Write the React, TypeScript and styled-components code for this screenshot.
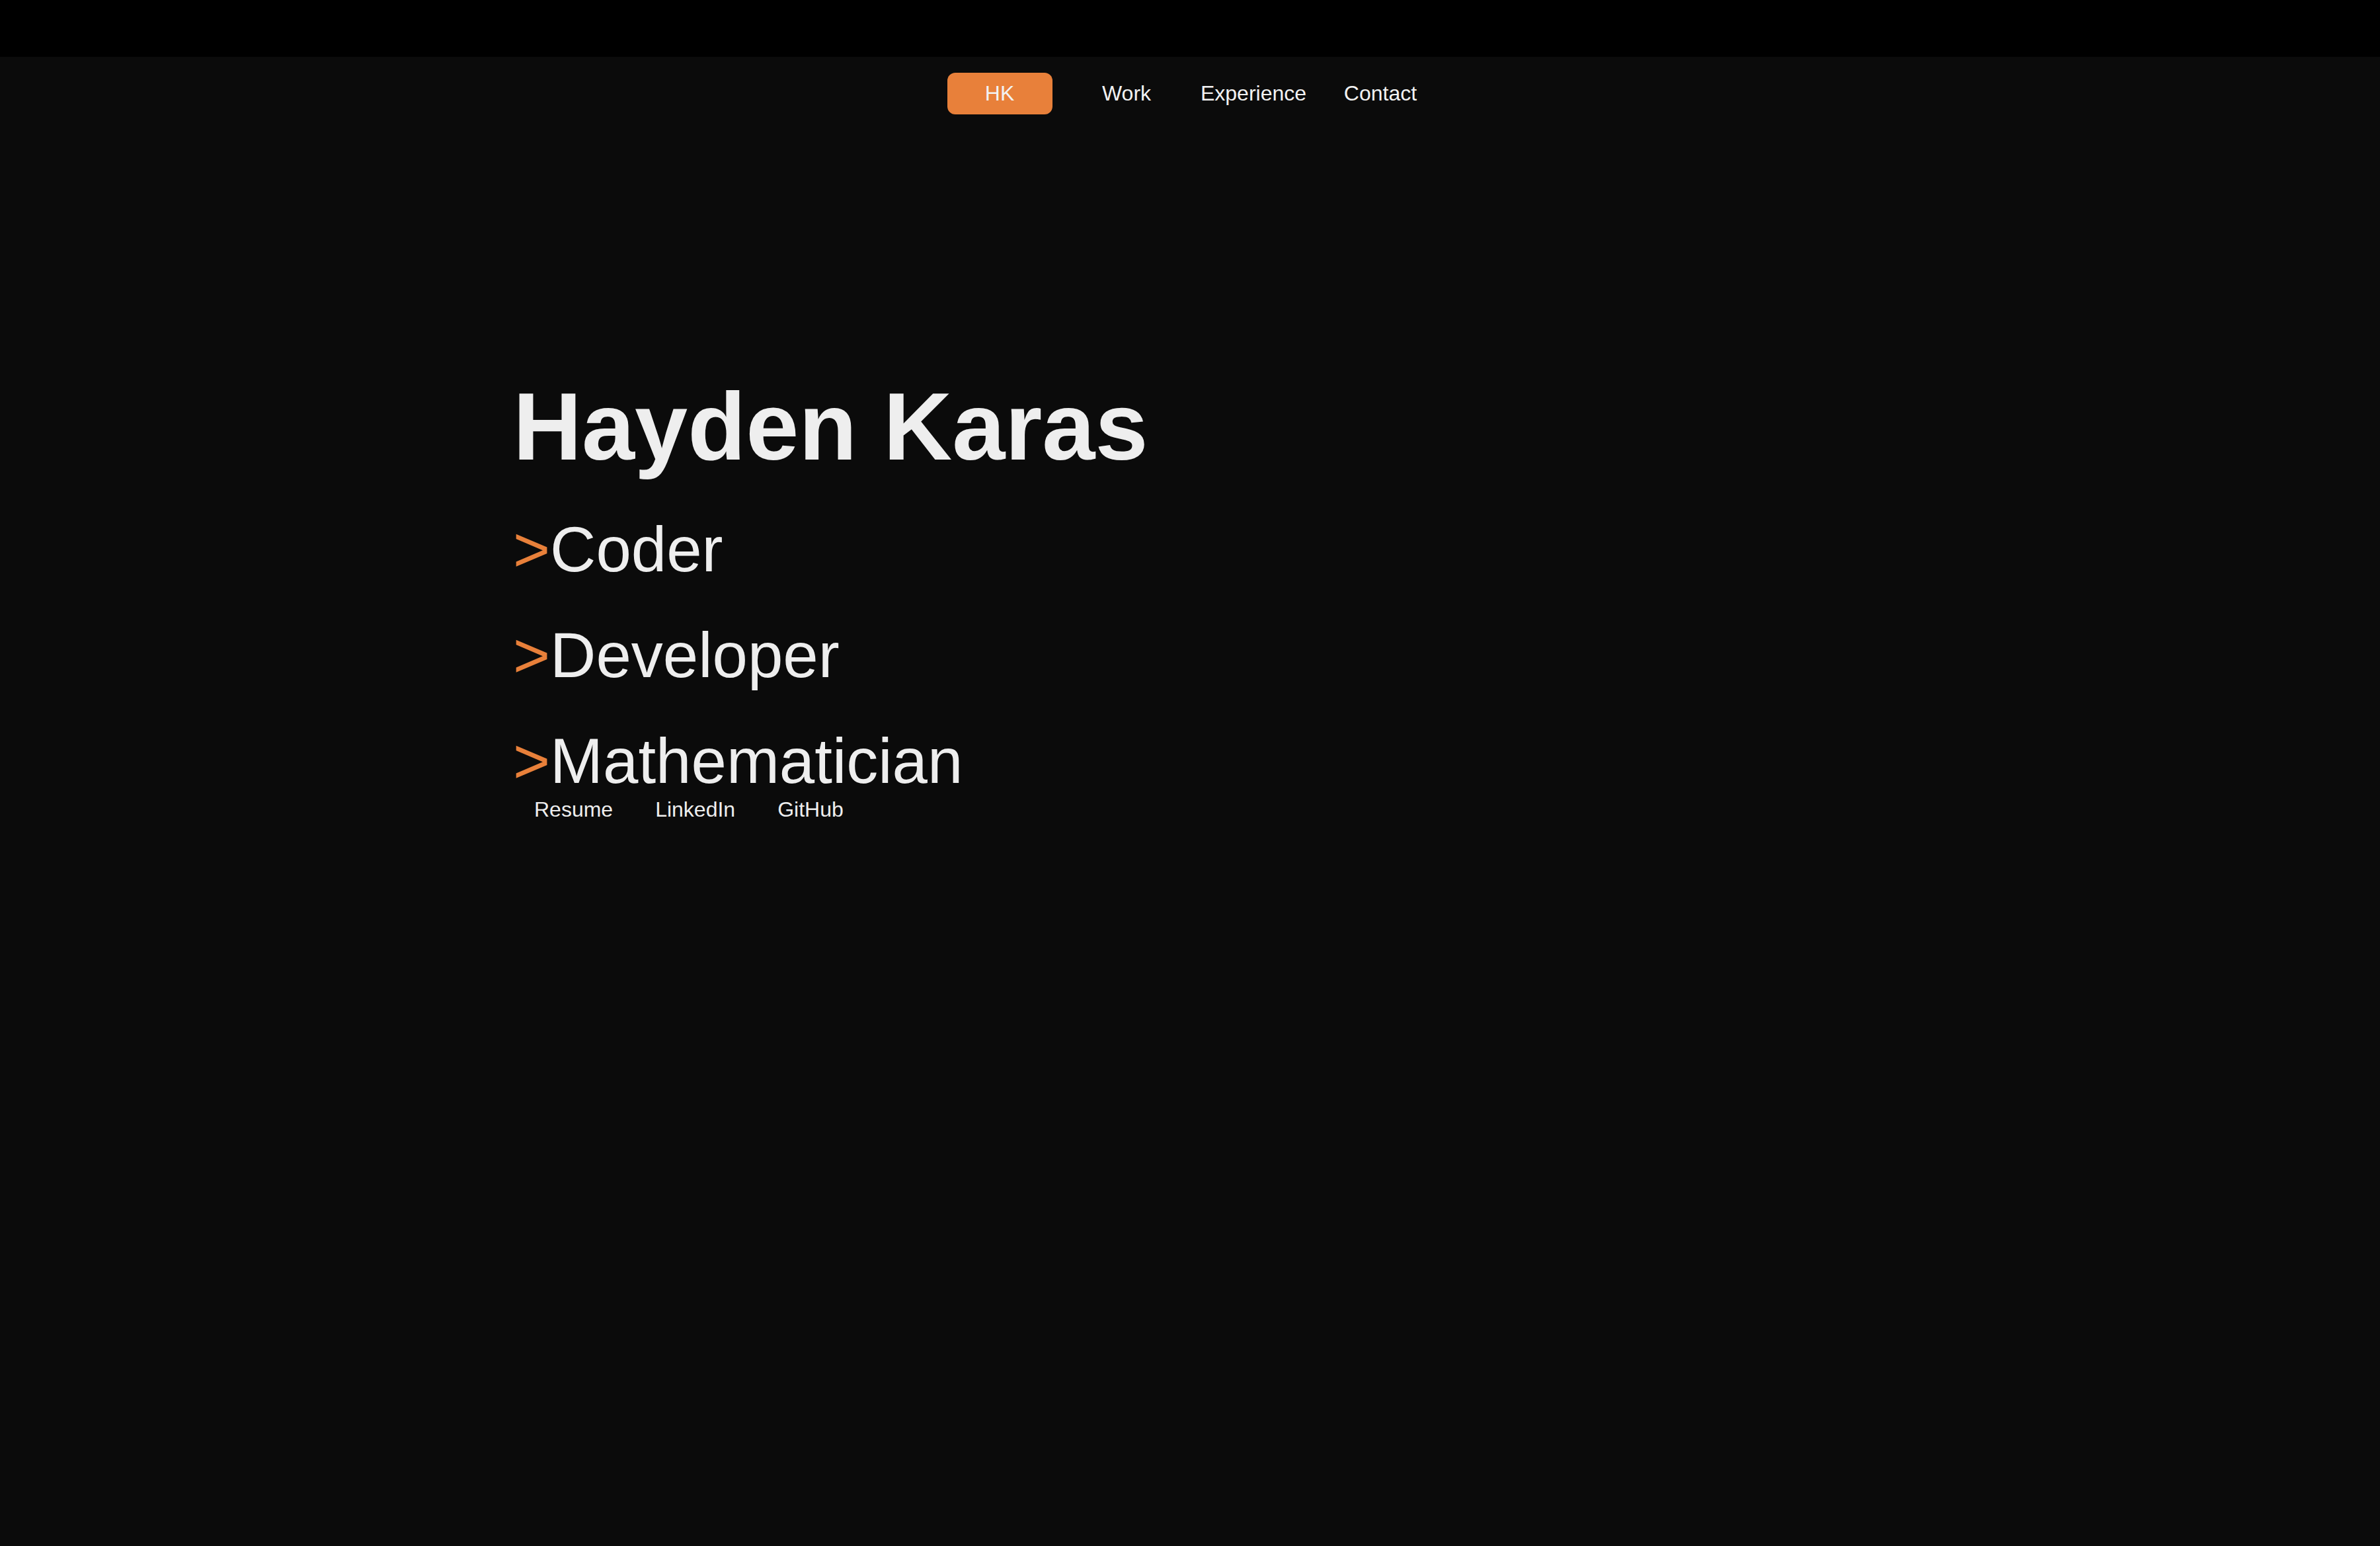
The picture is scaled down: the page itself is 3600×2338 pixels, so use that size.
import React from "react";
import styled, { createGlobalStyle } from "styled-components";

const GlobalStyle = createGlobalStyle`
  html, body {
    margin: 0;
    padding: 0;
    background: #0b0b0b;
  }
  body {
    font-family: "Liberation Sans", Arial, Helvetica, sans-serif;
    color: #eeeeee;
  }
  * { box-sizing: border-box; }
`;

const Page = styled.div`
  min-height: 100vh;
  background: #0b0b0b;
  display: flex;
  flex-direction: column;
`;

const TopBar = styled.div`
  height: 86px;
  background: #000000;
`;

const Nav = styled.nav`
  display: grid;
  grid-template-columns: repeat(4, 192px);
  justify-content: center;
  padding-top: 24px;
`;

const NavItem = styled.a<{ $brand?: boolean }>`
  justify-self: center;
  display: flex;
  align-items: center;
  justify-content: center;
  height: 63px;
  width: ${(p) => (p.$brand ? "159px" : "auto")};
  border-radius: 12px;
  background: ${(p) => (p.$brand ? "#e8803a" : "transparent")};
  color: #f2f2f2;
  font-size: 32px;
  text-decoration: none;
`;

const Hero = styled.main`
  width: 100%;
  max-width: 2048px;
  margin: 0 auto;
  padding-top: 393px;
`;

const Name = styled.h1`
  margin: 0 0 50px;
  font-size: 144px;
  line-height: 160px;
  font-weight: 700;
  color: #eeeeee;
`;

const Role = styled.p`
  margin: 0 0 50px;
  font-size: 96px;
  line-height: 110px;
  color: #eeeeee;
  &:last-of-type {
    margin-bottom: 0;
  }
`;

const Caret = styled.span`
  color: #e8803a;
`;

const Links = styled.div`
  display: flex;
`;

const LinkItem = styled.a`
  padding: 0 32px;
  font-size: 32px;
  line-height: 37px;
  color: #eeeeee;
  text-decoration: none;
`;

const roles = ["Coder", "Developer", "Mathematician"];

export default function App() {
  return (
    <Page>
      <GlobalStyle />
      <TopBar />
      <Nav>
        <NavItem $brand href="#">HK</NavItem>
        <NavItem href="#">Work</NavItem>
        <NavItem href="#">Experience</NavItem>
        <NavItem href="#">Contact</NavItem>
      </Nav>
      <Hero>
        <Name>Hayden Karas</Name>
        <div>
          {roles.map((r) => (
            <Role key={r}>
              <Caret>&gt;</Caret>
              {r}
            </Role>
          ))}
        </div>
        <Links>
          <LinkItem href="#">Resume</LinkItem>
          <LinkItem href="#">LinkedIn</LinkItem>
          <LinkItem href="#">GitHub</LinkItem>
        </Links>
      </Hero>
    </Page>
  );
}
